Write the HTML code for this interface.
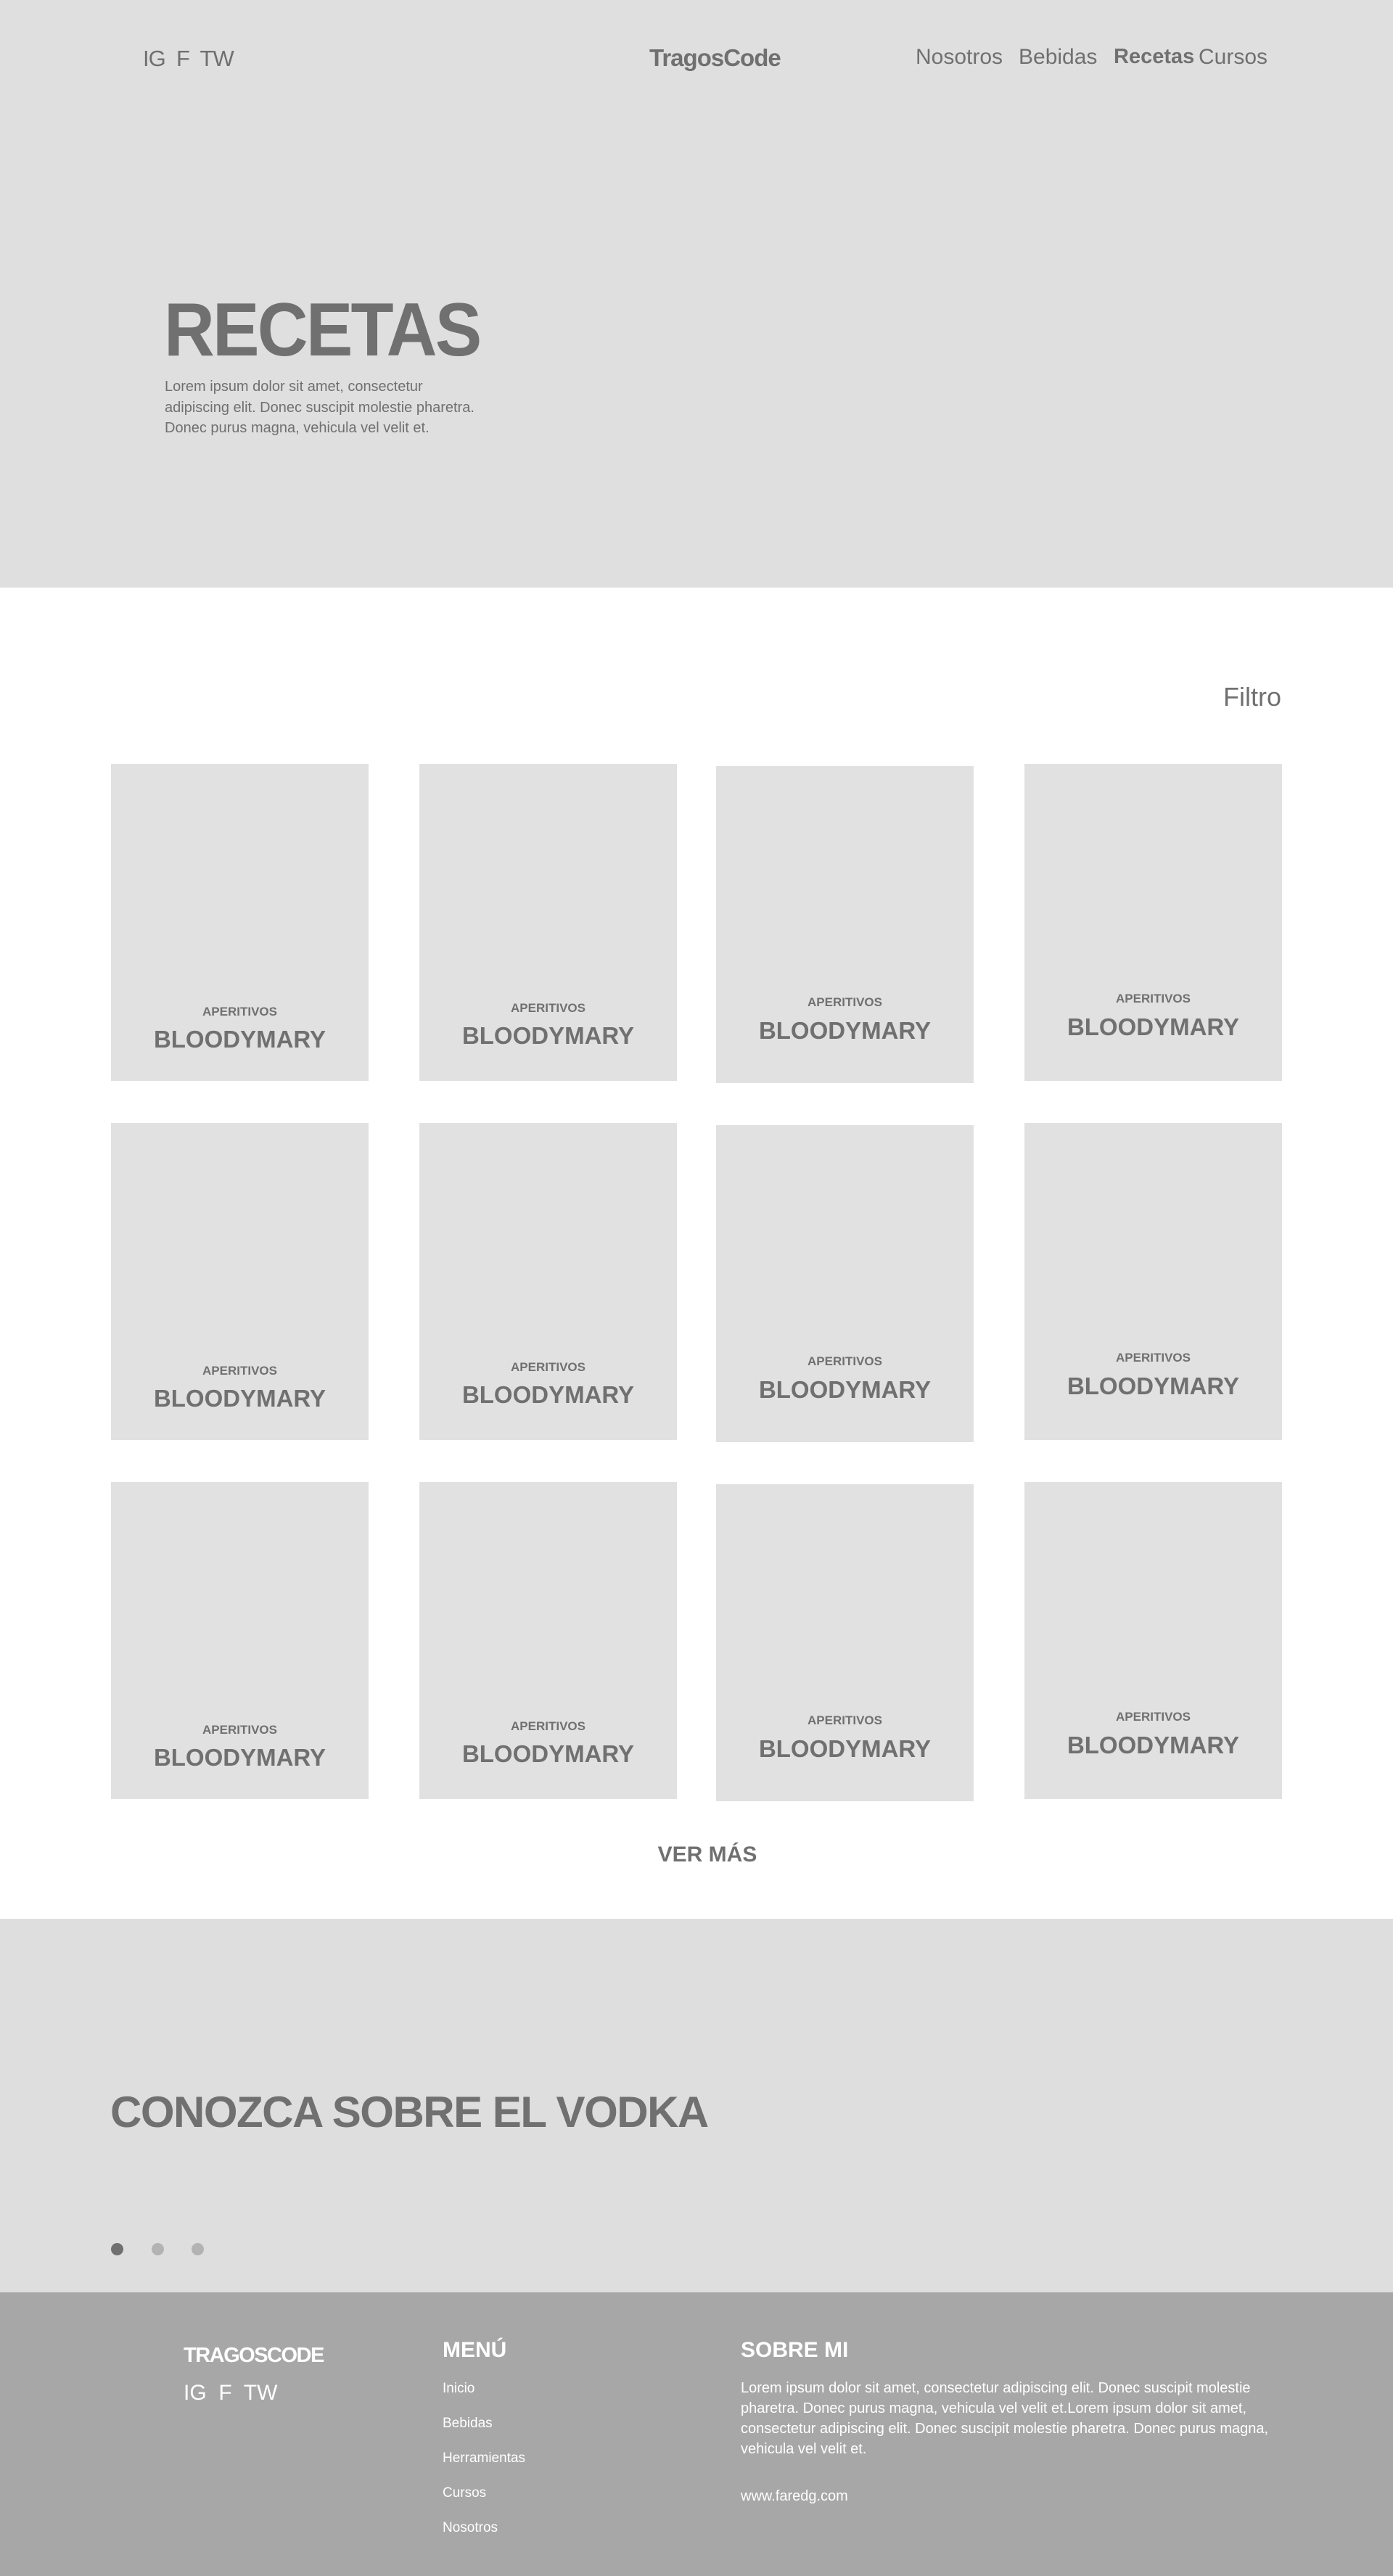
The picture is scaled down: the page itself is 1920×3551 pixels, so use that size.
<!DOCTYPE html>
<html><head><meta charset="utf-8"><style>
*{margin:0;padding:0;box-sizing:border-box}
body{width:1920px;height:3551px;position:relative;background:#fff;font-family:"Liberation Sans",sans-serif;color:#707070;overflow:hidden}
.a{position:absolute;white-space:nowrap;line-height:1}
.hero{position:absolute;left:0;top:0;width:1920px;height:810px;background:#dfdfdf}
.card{position:absolute;width:355px;height:437px;background:#e1e1e1}
.card .c1{position:absolute;left:0;width:100%;text-align:center;font-weight:bold;font-size:17px;line-height:1}
.card .c2{position:absolute;left:0;width:100%;text-align:center;font-weight:bold;font-size:33px;line-height:1}
.vod{position:absolute;left:0;top:2645px;width:1920px;height:515px;background:#dedede}
.foot{position:absolute;left:0;top:3160px;width:1920px;height:391px;background:#a7a7a7;color:#fff}
.dot{position:absolute;width:17px;height:17px;border-radius:50%}
</style></head><body>
<div class="hero">
 <div class="a" style="left:197px;top:65px;font-size:31px;letter-spacing:-1px">IG&nbsp; F&nbsp; TW</div>
 <div class="a" style="left:895px;top:63px;font-size:33px;font-weight:bold;letter-spacing:-1px">TragosCode</div>
 <div class="a" style="left:1262px;top:64px;font-size:30px">Nosotros</div>
 <div class="a" style="left:1404px;top:64px;font-size:30px">Bebidas</div>
 <div class="a" style="left:1535px;top:64px;font-size:29px;font-weight:bold">Recetas</div>
 <div class="a" style="left:1652px;top:64px;font-size:30px">Cursos</div>
 <div class="a" style="left:226px;top:403px;font-size:104px;font-weight:bold;letter-spacing:-3px;transform:scaleX(0.93);transform-origin:left">RECETAS</div>
 <div class="a" style="left:227px;top:519px;font-size:20px;line-height:28.5px;white-space:normal;width:500px">Lorem ipsum dolor sit amet, consectetur<br>adipiscing elit. Donec suscipit molestie pharetra.<br>Donec purus magna, vehicula vel velit et.</div>
</div>
<div class="a" style="right:154px;top:943px;font-size:36px">Filtro</div>

<div class="card" style="left:153px;top:1053px"><div class="c1" style="top:333px">APERITIVOS</div><div class="c2" style="top:363px">BLOODYMARY</div></div>
<div class="card" style="left:578px;top:1053px"><div class="c1" style="top:328px">APERITIVOS</div><div class="c2" style="top:358px">BLOODYMARY</div></div>
<div class="card" style="left:987px;top:1056px"><div class="c1" style="top:317px">APERITIVOS</div><div class="c2" style="top:348px">BLOODYMARY</div></div>
<div class="card" style="left:1412px;top:1053px"><div class="c1" style="top:315px">APERITIVOS</div><div class="c2" style="top:346px">BLOODYMARY</div></div>

<div class="card" style="left:153px;top:1548px"><div class="c1" style="top:333px">APERITIVOS</div><div class="c2" style="top:363px">BLOODYMARY</div></div>
<div class="card" style="left:578px;top:1548px"><div class="c1" style="top:328px">APERITIVOS</div><div class="c2" style="top:358px">BLOODYMARY</div></div>
<div class="card" style="left:987px;top:1551px"><div class="c1" style="top:317px">APERITIVOS</div><div class="c2" style="top:348px">BLOODYMARY</div></div>
<div class="card" style="left:1412px;top:1548px"><div class="c1" style="top:315px">APERITIVOS</div><div class="c2" style="top:346px">BLOODYMARY</div></div>

<div class="card" style="left:153px;top:2043px"><div class="c1" style="top:333px">APERITIVOS</div><div class="c2" style="top:363px">BLOODYMARY</div></div>
<div class="card" style="left:578px;top:2043px"><div class="c1" style="top:328px">APERITIVOS</div><div class="c2" style="top:358px">BLOODYMARY</div></div>
<div class="card" style="left:987px;top:2046px"><div class="c1" style="top:317px">APERITIVOS</div><div class="c2" style="top:348px">BLOODYMARY</div></div>
<div class="card" style="left:1412px;top:2043px"><div class="c1" style="top:315px">APERITIVOS</div><div class="c2" style="top:346px">BLOODYMARY</div></div>

<div class="a" style="left:0;width:1950px;text-align:center;top:2542px;font-size:30px;font-weight:bold">VER MÁS</div>

<div class="vod">
 <div class="a" style="left:152px;top:237px;font-size:60px;font-weight:bold;letter-spacing:-1.5px">CONOZCA SOBRE EL VODKA</div>
 <div class="dot" style="left:153px;top:447px;background:#707070"></div>
 <div class="dot" style="left:209px;top:447px;background:#b3b3b3"></div>
 <div class="dot" style="left:264px;top:447px;background:#b3b3b3"></div>
</div>
<div class="foot">
 <div class="a" style="left:253px;top:73px;font-size:29px;font-weight:bold;letter-spacing:-1.5px">TRAGOSCODE</div>
 <div class="a" style="left:253px;top:124px;font-size:30px">IG&nbsp; F&nbsp; TW</div>
 <div class="a" style="left:610px;top:65px;font-size:30px;font-weight:bold">MENÚ</div>
 <div class="a" style="left:610px;top:123px;font-size:19px">Inicio</div>
 <div class="a" style="left:610px;top:171px;font-size:19px">Bebidas</div>
 <div class="a" style="left:610px;top:219px;font-size:19px">Herramientas</div>
 <div class="a" style="left:610px;top:267px;font-size:19px">Cursos</div>
 <div class="a" style="left:610px;top:315px;font-size:19px">Nosotros</div>
 <div class="a" style="left:1021px;top:65px;font-size:30px;font-weight:bold">SOBRE MI</div>
 <div class="a" style="left:1021px;top:118px;font-size:20px;line-height:28px;white-space:normal;width:760px">Lorem ipsum dolor sit amet, consectetur adipiscing elit. Donec suscipit molestie pharetra. Donec purus magna, vehicula vel velit et.Lorem ipsum dolor sit amet, consectetur adipiscing elit. Donec suscipit molestie pharetra. Donec purus magna, vehicula vel velit et.</div>
 <div class="a" style="left:1021px;top:271px;font-size:20px">www.faredg.com</div>
</div>
</body></html>
